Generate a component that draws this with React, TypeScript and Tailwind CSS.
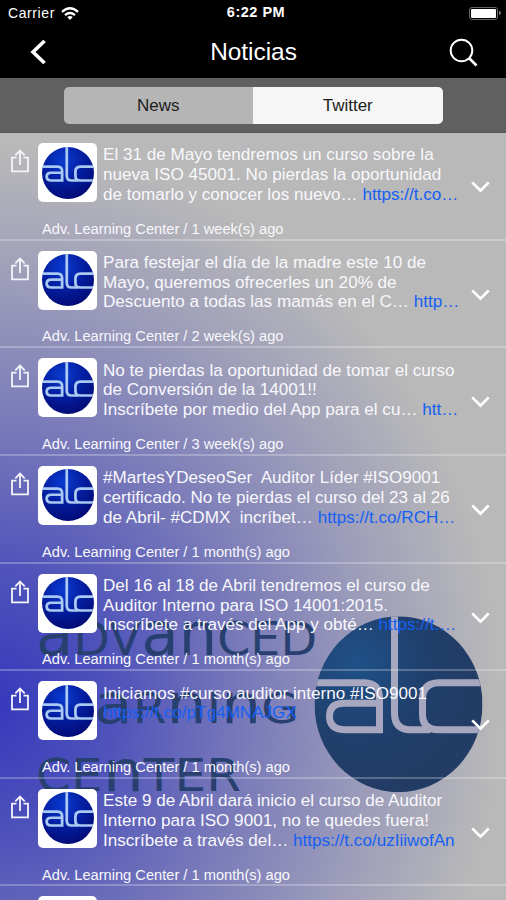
import { ChevronDown } from 'lucide-react';

interface Tweet {
  id: number;
  lines: string[];
  link: string;
  age: string;
}

const tweets: Tweet[] = [
  {
    id: 1,
    lines: ['El 31 de Mayo tendremos un curso sobre la', 'nueva ISO 45001. No pierdas la oportunidad', 'de tomarlo y conocer los nuevo… '],
    link: 'https://t.co…',
    age: '1 week(s) ago',
  },
  {
    id: 2,
    lines: ['Para festejar el día de la madre este 10 de', 'Mayo, queremos ofrecerles un 20% de', 'Descuento a todas las mamás en el C… '],
    link: 'http…',
    age: '2 week(s) ago',
  },
  {
    id: 3,
    lines: ['No te pierdas la oportunidad de tomar el curso', 'de Conversión de la 14001!!', 'Inscríbete por medio del App para el cu… '],
    link: 'htt…',
    age: '3 week(s) ago',
  },
  {
    id: 4,
    lines: ['#MartesYDeseoSer  Auditor Líder #ISO9001', 'certificado. No te pierdas el curso del 23 al 26', 'de Abril- #CDMX  incríbet… '],
    link: 'https://t.co/RCH…',
    age: '1 month(s) ago',
  },
  {
    id: 5,
    lines: ['Del 16 al 18 de Abril tendremos el curso de', 'Auditor Interno para ISO 14001:2015.', 'Inscríbete a través del App y obté… '],
    link: 'https://t.…',
    age: '1 month(s) ago',
  },
  {
    id: 6,
    lines: ['Iniciamos #curso auditor interno #ISO9001', ''],
    link: 'https://t.co/pTg4MNAJGX',
    age: '1 month(s) ago',
  },
  {
    id: 7,
    lines: ['Este 9 de Abril dará inicio el curso de Auditor', 'Interno para ISO 9001, no te quedes fuera!', 'Inscríbete a través del… '],
    link: 'https://t.co/uzIiiwofAn',
    age: '1 month(s) ago',
  },
];

// Strokes of the round mark, on a 168 x 176 canvas
function MarkStrokes({ color, width }: { color: string; width: number }) {
  return (
    <g fill="none" stroke={color} strokeWidth={width}>
      <path d="M0 66.5H50Q65 67 65 82V113.5H30Q15 113 15 100Q15 87 30 87H64" />
      <path d="M80 0V97Q80 113.5 96 113.5H116" />
      <path d="M168 66.5H124Q108 67 108 83V98Q108 113.5 124 113.5H168" />
    </g>
  );
}

function Avatar() {
  return (
    <div className="h-[59px] w-[59px] shrink-0 rounded-[5px] bg-white p-[3.5px]">
      <svg className="block h-full w-full" viewBox="0 0 168 176" preserveAspectRatio="none">
        <defs>
          <radialGradient id="avatarFill" cx="0.4" cy="0.25" r="0.75">
            <stop offset="0" stopColor="#0a3cd0" />
            <stop offset="0.5" stopColor="#0420a4" />
            <stop offset="1" stopColor="#020c78" />
          </radialGradient>
          <clipPath id="avatarClip">
            <ellipse cx="84" cy="88" rx="84" ry="88" />
          </clipPath>
        </defs>
        <g clipPath="url(#avatarClip)">
          <rect width="168" height="176" fill="url(#avatarFill)" />
          <MarkStrokes color="#a9c8f2" width={9} />
        </g>
      </svg>
    </div>
  );
}

function ShareIcon() {
  return (
    <svg className="h-[24px] w-[20px]" viewBox="0 0 20 24" fill="none" stroke="#f4f4fa" strokeWidth="1.8">
      <path d="M6.5 8.7H2V22.3H18V8.7H13.5" />
      <path d="M10 16V2M5.3 6.4L10 1.6L14.7 6.4" />
    </svg>
  );
}

function Backdrop() {
  return (
    <svg className="absolute inset-0 h-full w-full" viewBox="0 132 506 768" preserveAspectRatio="none">
      <defs>
        <radialGradient id="sky" gradientUnits="userSpaceOnUse" cx="0" cy="0" r="1" gradientTransform="translate(-10 705) scale(510 560)">
          <stop offset="0" stopColor="#3438bc" />
          <stop offset="0.25" stopColor="#5054ba" />
          <stop offset="0.5" stopColor="#7879b9" />
          <stop offset="0.75" stopColor="#9c9cba" />
          <stop offset="1" stopColor="#b9b9b9" />
        </radialGradient>
        <radialGradient id="markFill" cx="0.25" cy="0.28" r="0.7">
          <stop offset="0" stopColor="#1f5188" />
          <stop offset="0.6" stopColor="#203f6c" />
          <stop offset="1" stopColor="#223c65" />
        </radialGradient>
        <clipPath id="markClip">
          <ellipse cx="84" cy="88" rx="84" ry="88" />
        </clipPath>
      </defs>
      <rect y="132" width="506" height="768" fill="url(#sky)" />
      {/* Lowercase letters are enlarged to reach cap height */}
      <g fill="#27406f" fontFamily="DejaVu Sans, sans-serif" fontSize="47">
        <text x="36" y="655" textLength="281" lengthAdjust="spacingAndGlyphs">
          <tspan fontSize="60">a</tspan>DV<tspan fontSize="60">an</tspan>CED
        </text>
        <text x="36" y="723" textLength="263" lengthAdjust="spacingAndGlyphs" fontSize="43">
          LE<tspan fontSize="56">a</tspan>R<tspan fontSize="56">n</tspan>I<tspan fontSize="56">n</tspan>G
        </text>
        <text x="36" y="791" textLength="205" lengthAdjust="spacingAndGlyphs" fontSize="44">
          CE<tspan fontSize="57">n</tspan>TER
        </text>
      </g>
      <g transform="translate(314.5 616)" clipPath="url(#markClip)">
        <rect width="168" height="176" fill="url(#markFill)" />
        <MarkStrokes color="#a8a7c0" width={7} />
      </g>
    </svg>
  );
}

function TweetRow({ tweet }: { tweet: Tweet }) {
  return (
    <article className="flex h-[107.65px] shrink-0 border-b-2 border-white/25">
      <div className="w-[38px] shrink-0 pl-[10px] pt-[16px]">
        <ShareIcon />
      </div>
      <div className="min-w-0 flex-1">
        <div className="flex pt-[10px]">
          <Avatar />
          <p className="ml-[6px] mt-[2.4px] h-[56.6px] text-[17.1px] leading-[19.7px] whitespace-pre text-[#f8f8fc]">
            {tweet.lines.map((line, i) => (
              <span key={i} className="block">
                {line}
                {i === tweet.lines.length - 1 && <span className="text-[#1560f4]">{tweet.link}</span>}
              </span>
            ))}
          </p>
        </div>
        <p className="mt-[17.8px] pl-1 text-[14.65px] leading-[18px] text-[#f8f8fc]">Adv. Learning Center / {tweet.age}</p>
      </div>
      <ChevronDown className="mt-[37px] mr-[9.5px] h-[33px] w-[33px] shrink-0 text-white" strokeWidth={2} strokeLinecap="butt" strokeLinejoin="miter" />
    </article>
  );
}

export default function App() {
  return (
    <div className="flex h-[900px] w-[506px] flex-col overflow-hidden bg-black font-['Liberation_Sans',sans-serif]">
      {/* Status bar */}
      <div className="grid h-[26px] shrink-0 grid-cols-3 items-center pr-[5px] pl-2 text-[14px] text-white">
        <div className="flex items-center gap-[6px]">
          <span className="tracking-[0.6px]">Carrier</span>
          <svg className="h-[13px] w-[18px]" viewBox="0 0 18 13" fill="none" stroke="white" strokeWidth="2.3">
            <path d="M1 4.8Q9 -2.2 17 4.8" />
            <path d="M4 8.1Q9 3.8 14 8.1" />
            <path d="M6.2 10L9 13L11.8 10Q9 7.8 6.2 10Z" fill="white" stroke="none" />
          </svg>
        </div>
        <span className="pl-[3px] text-center text-[14.5px] font-bold tracking-[0.5px]">6:22 PM</span>
        <div className="flex items-center justify-end gap-px">
          <div className="h-[13px] w-[29px] rounded-[3px] border border-[#666] p-px">
            <div className="h-full w-full rounded-[1px] bg-white" />
          </div>
          <div className="h-[4px] w-[2px] rounded-r bg-[#777]" />
        </div>
      </div>

      {/* Navigation */}
      <header className="grid h-[52px] shrink-0 grid-cols-[1fr_auto_1fr] items-center pr-[28px] pl-[29px] text-white">
        <svg className="h-[26px] w-[18px]" viewBox="0 0 18 26" fill="none" stroke="white" strokeWidth="3.6">
          <path d="M15.5 2L4 13L15.5 24" />
        </svg>
        <h1 className="text-[24.4px]">Noticias</h1>
        <svg className="h-[29px] w-[29px] justify-self-end" viewBox="0 0 29 29" fill="none" stroke="white" strokeWidth="2">
          <circle cx="12.5" cy="12.5" r="10.8" />
          <path d="M20 20L27.5 27.5" strokeWidth="2.6" />
        </svg>
      </header>

      {/* Tabs */}
      <div className="h-[55px] shrink-0 border-b border-[#555] bg-[#606060] px-[63.5px] pt-[9px]">
        <div className="grid h-[37px] grid-cols-2 overflow-hidden rounded-[5px] text-[17px] text-[#1c1c1c]">
          <button className="bg-[#b5b5b5]">News</button>
          <button className="bg-[#f6f6f6]">Twitter</button>
        </div>
      </div>

      {/* Timeline */}
      <main className="relative min-h-0 flex-1 overflow-hidden">
        <Backdrop />
        <div className="relative flex flex-col">
          {tweets.map((tweet) => (
            <TweetRow key={tweet.id} tweet={tweet} />
          ))}
          <div className="pt-[10px] pl-[38px]">
            <Avatar />
          </div>
        </div>
      </main>
    </div>
  );
}
